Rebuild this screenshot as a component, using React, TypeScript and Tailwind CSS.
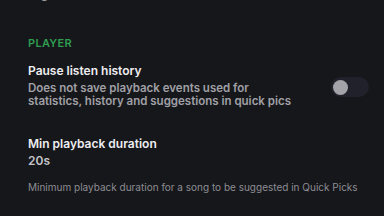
export default function App() {
  return (
    <div
      className="w-[384px] h-[216px] overflow-hidden bg-[#16171b] px-7"
      style={{ fontFamily: 'Inter, "Noto Sans", sans-serif' }}
    >
      {/* previous item, cut off at the top */}
      <div className="-mt-[12px] h-[14px] text-[11px] leading-[14px] font-semibold text-[#9b9ba1]">
        <span className="invisible">Lo</span>g
      </div>

      <div className="mt-[34px] text-[11px] leading-[14px] font-semibold tracking-[0.3px] text-[#2f9c50]">
        PLAYER
      </div>

      <div className="mt-[13px] flex items-center justify-between">
        <div>
          <div className="text-[12px] leading-[16px] font-semibold text-[#ededf0]">
            Pause listen history
          </div>
          <div className="mt-[3px] text-[11.5px] leading-[13px] font-semibold text-[#a0a0a6] whitespace-nowrap">
            Does not save playback events used for
            <br />
            statistics, history and suggestions in quick pics
          </div>
        </div>
        <button className="mr-[-13px] mt-[3px] flex h-[20px] w-[38px] items-center rounded-full bg-[#20212b] px-[2px]">
          <span className="block h-[15px] w-[15px] rounded-full bg-[#a3a3a9]" />
        </button>
      </div>

      <div className="mt-[28px] text-[12px] leading-[16px] font-semibold text-[#ededf0]">
        Min playback duration
      </div>
      <div className="mt-[1px] text-[12px] leading-[16px] font-semibold text-[#c4c4c9]">
        20s
      </div>

      <div className="mt-[11px] text-[10px] leading-[14px] text-[#8d8d93] whitespace-nowrap">
        Minimum playback duration for a song to be suggested in Quick Picks
      </div>
    </div>
  );
}
